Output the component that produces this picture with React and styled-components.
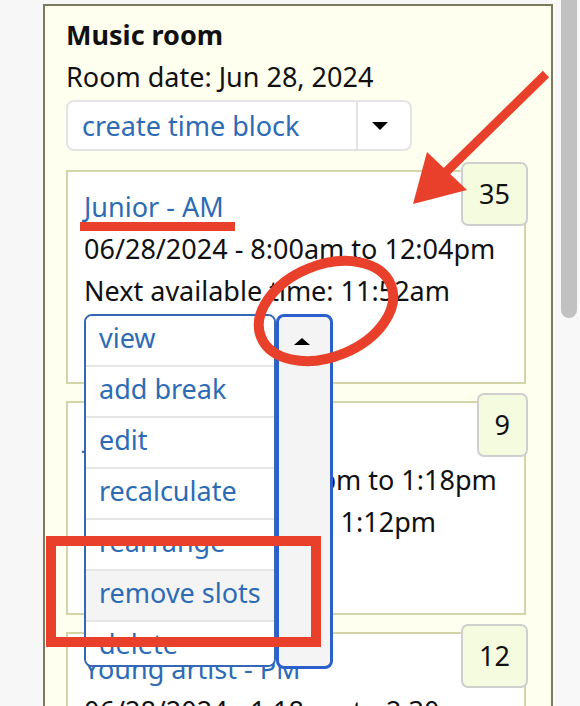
import React from 'react'
import styled, { createGlobalStyle } from 'styled-components'

const blocks = [
  {
    id: 1,
    title: 'Junior - AM',
    range: '06/28/2024 - 8:00am to 12:04pm',
    next: '11:52am',
    count: 35,
    open: true,
  },
  {
    id: 2,
    title: 'Junior - PM',
    range: '06/28/2024 - 12:04pm to 1:18pm',
    next: '1:12pm',
    count: 9,
  },
  {
    id: 3,
    title: 'Young artist - PM',
    range: '06/28/2024 - 1:18pm to 2:30pm',
    next: '1:18pm',
    count: 12,
  },
]

const actions = ['view', 'add break', 'edit', 'recalculate', 'rearrange', 'remove slots', 'delete']

export default function App() {
  return (
    <>
      <GlobalStyle />
      <Page>
        <Gutter />
        <RoomPanel>
          <RoomTitle>Music room</RoomTitle>
          <RoomDate>Room date: Jun 28, 2024</RoomDate>
          <CreateButton>
            <CreateLabel>create time block</CreateLabel>
            <CreateCaret>
              <Triangle $dir="down" />
            </CreateCaret>
          </CreateButton>

          <BlockList>
            {blocks.map((b) => (
              <BlockCard key={b.id}>
                <CountBadge>{b.count}</CountBadge>
                <BlockLink>{b.title}</BlockLink>
                <Line>{b.range}</Line>
                <Line>Next available time: {b.next}</Line>
                <ActionGroup $open={b.open}>
                  <ActionMenu>
                    {(b.open ? actions : actions.slice(0, 1)).map((a) => (
                      <ActionItem key={a} $hover={b.open && a === 'remove slots'}>
                        {a}
                      </ActionItem>
                    ))}
                  </ActionMenu>
                  <ActionToggle $open={b.open}>
                    <Triangle $dir={b.open ? 'up' : 'down'} />
                  </ActionToggle>
                </ActionGroup>
              </BlockCard>
            ))}
          </BlockList>
        </RoomPanel>
        <ScrollTrack>
          <ScrollThumb />
        </ScrollTrack>

        {/* red markup drawn over the screenshot */}
        <Markup viewBox="0 0 580 706">
          <line x1="546" y1="74" x2="444" y2="174" stroke="#e8402a" strokeWidth="9" />
          <polygon points="413,204 427,152 467,190" fill="#e8402a" />
          <rect x="80" y="222" width="155" height="9" fill="#e8402a" />
          <ellipse
            cx="326"
            cy="311"
            rx="70"
            ry="46"
            transform="rotate(-22 326 311)"
            fill="none"
            stroke="#e8402a"
            strokeWidth="10"
          />
          <rect x="51" y="541" width="265" height="101" fill="none" stroke="#e8402a" strokeWidth="10" />
        </Markup>
      </Page>
    </>
  )
}

const GlobalStyle = createGlobalStyle`
  body {
    margin: 0;
    background: #f7f7f7;
    font-family: 'Noto Sans', 'Open Sans', sans-serif;
    color: #111;
  }
  * { box-sizing: border-box; }
`

const Page = styled.div`
  position: relative;
  display: flex;
  width: 580px;
  height: 706px;
  overflow: hidden;
  background: #f7f7f7;
  font-size: 27px;
  line-height: 42px;
`

const Gutter = styled.div`
  width: 43px;
  flex-shrink: 0;
`

const RoomPanel = styled.div`
  width: 510px;
  flex-shrink: 0;
  margin-top: 4px;
  padding: 8px 25px 0 21px;
  border: 2px solid #7b7b5c;
  border-bottom: none;
  background: #fffff0;
`

const RoomTitle = styled.h3`
  margin: 0;
  font-size: 27px;
  font-weight: 700;
  line-height: 42px;
`

const RoomDate = styled.p`
  margin: 0;
`

const CreateButton = styled.div`
  display: flex;
  width: 346px;
  height: 51px;
  margin-top: 2px;
  border: 2px solid #e4e4e4;
  border-radius: 8px;
  background: #fff;
`

const CreateLabel = styled.div`
  flex: 1;
  padding-left: 14px;
  line-height: 47px;
  color: #2d6cb5;
`

const CreateCaret = styled.div`
  width: 54px;
  display: flex;
  align-items: center;
  justify-content: center;
  padding-right: 8px;
  border-left: 2px solid #e4e4e4;
`

const Triangle = styled.span`
  width: 0;
  height: 0;
  border-left: 8px solid transparent;
  border-right: 8px solid transparent;
  ${(p) => (p.$dir === 'up' ? 'border-bottom: 7px solid #000;' : 'border-top: 8px solid #000;')}
`

const BlockList = styled.div`
  display: flex;
  flex-direction: column;
  gap: 17px;
  margin-top: 19px;
`

const BlockCard = styled.div`
  position: relative;
  padding: 14px 16px 17px;
  border: 2px solid #d4d4a9;
  background: #fff;
`

const CountBadge = styled.div`
  position: absolute;
  top: -10px;
  right: -4px;
  padding: 9px 16px;
  border: 2px solid #cfcfcf;
  border-radius: 7px;
  background: #f4fbdf;
  line-height: 42px;
`

const BlockLink = styled.a`
  display: block;
  color: #2d6cb5;
  text-decoration: none;
`

const Line = styled.div``

const ActionGroup = styled.div`
  position: relative;
  z-index: ${(p) => (p.$open ? 5 : 1)};
  display: flex;
  align-items: flex-start;
  height: 51px;
  margin-top: 2px;
`

const ActionMenu = styled.div`
  width: 192px;
  border: 2px solid #3468b6;
  border-radius: 8px;
  background: #fff;
  overflow: hidden;
`

const ActionItem = styled.div`
  height: 51px;
  padding: 0 0 6px 13px;
  line-height: 43px;
  color: #2d6cb5;
  background: ${(p) => (p.$hover ? '#f4f4f4' : '#fff')};
  border-bottom: 2px solid #e6e6e6;
  white-space: nowrap;

  &:last-child {
    height: 43px;
    padding-bottom: 0;
    border-bottom: none;
  }
`

const ActionToggle = styled.div`
  width: 57px;
  height: ${(p) => (p.$open ? '355px' : '51px')};
  display: flex;
  justify-content: center;
  padding: 21px 5px 0 0;
  border: 3px solid #2b5fcc;
  border-radius: 8px;
  background: #f4f4f4;
`

const ScrollTrack = styled.div`
  flex: 1;
  border-left: 2px solid #fdfdfd;
  background: #f8f8f8;
  padding-left: 6px;
`

const ScrollThumb = styled.div`
  width: 16px;
  height: 318px;
  border-radius: 0 0 8px 8px;
  background: #c1c1c1;
`

const Markup = styled.svg`
  position: absolute;
  top: 0;
  left: 0;
  width: 580px;
  height: 706px;
  pointer-events: none;
  z-index: 20;
`
